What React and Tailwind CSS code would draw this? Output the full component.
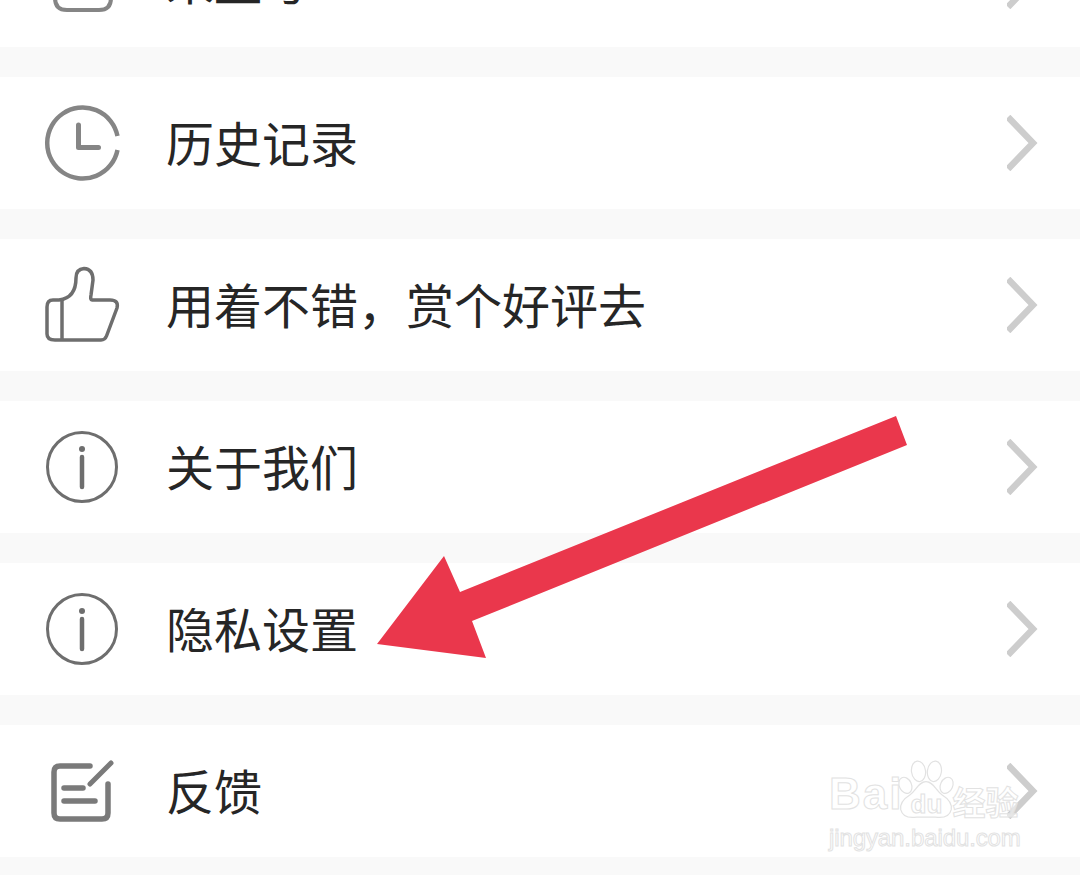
const Clock = () => (
  <svg width="80" height="80" viewBox="1.500 0 80 80" fill="none" stroke="#858585" strokeWidth="4.500" className="blur-[0.5px]">
    <path d="M77 33 A35.5 35.5 0 1 0 77 47" />
    <path d="M38 22 V44.5 H58" strokeWidth="5" strokeLinejoin="round" strokeLinecap="round" />
  </svg>
);

const Thumb = () => (
  <svg width="80" height="80" viewBox="2 0 80 80" fill="none" stroke="#6e6e6e" strokeWidth="3.500" strokeLinejoin="round" className="blur-[0.5px]">
    <path d="M15 75 H61 Q65 75 66.500 71 L77 43 Q79 35 70 35 H52 Q50 35 51 30 L53 15 Q53 4 44 3.500 Q36 4 36 13 Q36 33 19 35 H13 Q7 35 7 42 V69 Q7 75 15 75 Z" />
    <path d="M22 35 V75" />
  </svg>
);

const Info = () => (
  <svg width="80" height="80" viewBox="0 0 80 80" fill="none" stroke="#6e6e6e" className="blur-[0.5px]">
    <circle cx="40" cy="40" r="34.500" strokeWidth="3" />
    <path d="M40 30 V60" strokeWidth="4.500" strokeLinecap="round" />
    <circle cx="40" cy="22" r="3" fill="#6e6e6e" stroke="none" />
  </svg>
);

const Note = () => (
  <svg width="80" height="80" viewBox="0 -2 80 80" fill="none" stroke="#7a7a7a" strokeWidth="5.500" strokeLinecap="round" strokeLinejoin="round" className="blur-[0.5px]">
    <path d="M48 13 H18 Q12 13 12 19 V60 Q12 66 18 66 H60 Q66 66 66 60 V31" />
    <path d="M48 31 L69 10" strokeWidth="5" />
    <path d="M22 35 H41 M22 48 H53" />
  </svg>
);

const Box = () => (
  <svg width="80" height="80" viewBox="0 0 80 80" fill="none" stroke="#858585" strokeWidth="4" className="blur-[0.5px]">
    <path d="M13 30 V57 Q13 69 25 69 H57 Q69 69 69 57 V30" />
  </svg>
);

const Chevron = () => (
  <svg width="32" height="56" viewBox="1 0 32 56" fill="none" stroke="#cdcdcd" strokeWidth="6.500" className="blur-[0.7px]">
    <path d="M2 2 L27 28 L2 54" />
  </svg>
);

const rows = [
  { icon: <Box />, label: "来盖号" },
  { icon: <Clock />, label: "历史记录" },
  { icon: <Thumb />, label: "用着不错，赏个好评去" },
  { icon: <Info />, label: "关于我们" },
  { icon: <Info />, label: "隐私设置" },
  { icon: <Note />, label: "反馈" },
];

function Row({ icon, label }) {
  return (
    <div className="flex h-[132px] items-center bg-white pl-[42px] pr-[41px]">
      <div className="w-[124px] shrink-0">{icon}</div>
      <span className="flex-1 pb-[4px] text-[48px] leading-none text-[#262626]">{label}</span>
      <Chevron />
    </div>
  );
}

// 百度经验 watermark sits on top of the last row
function Watermark() {
  const outline = "[-webkit-text-stroke:1px_#e2e2e2] text-white/50";
  return (
    <div className="absolute left-[829px] top-[759px] flex w-[200px] flex-col">
      <div className="flex items-end">
        <span className={`pb-[2px] text-[44px] font-bold leading-[50px] tracking-[2px] font-['Liberation_Sans',sans-serif] ${outline}`}>
          Bai
        </span>
        <div className="relative ml-[-6px] flex h-[62px] w-[58px] items-end justify-center">
          <svg width="58" height="62" viewBox="0 0 62 66" fill="#ffffff" fillOpacity="0.5" stroke="#e2e2e2" strokeWidth="1.300" className="absolute inset-0">
            <ellipse cx="23" cy="13" rx="7.500" ry="11" transform="rotate(-8 23 13)" />
            <ellipse cx="40" cy="13" rx="7.500" ry="11" transform="rotate(8 40 13)" />
            <ellipse cx="9" cy="28" rx="6.500" ry="9" transform="rotate(-25 9 28)" />
            <ellipse cx="53" cy="28" rx="6.500" ry="9" transform="rotate(25 53 28)" />
            <path d="M31 24 C23 24 21 33 14 38 C6 43 3 48 4 54 C6 62 14 63 21 62 H41 C48 63 56 62 58 54 C59 48 56 43 48 38 C41 33 39 24 31 24 Z" />
          </svg>
          <span className={`relative text-[26px] font-bold leading-[34px] font-['Liberation_Sans',sans-serif] ${outline}`}>
            du
          </span>
        </div>
        <span className={`ml-[-3px] text-[33px] font-bold leading-[40px] ${outline}`}>经验</span>
      </div>
      <span className={`mt-[2px] whitespace-nowrap text-[24px] leading-[30px] tracking-[-0.1px] font-['Liberation_Sans',sans-serif] ${outline}`}>
        jingyan.baidu.com
      </span>
    </div>
  );
}

export default function App() {
  return (
    <div className="relative h-[875px] w-[1080px] overflow-hidden bg-[#f9f9f9] font-['Noto_Sans_CJK_SC',sans-serif]">
      <div className="mt-[-85px] flex flex-col gap-[30px]">
        {rows.map((row) => (
          <Row key={row.label} icon={row.icon} label={row.label} />
        ))}
      </div>
      <svg width="1080" height="875" viewBox="0 0 1080 875" className="absolute left-0 top-0">
        <path d="M896 416 L907 445 L472 621 L486 658 L377 644 L444 556 L460 592 Z" fill="#ea374c" />
      </svg>
      <Watermark />
    </div>
  );
}
